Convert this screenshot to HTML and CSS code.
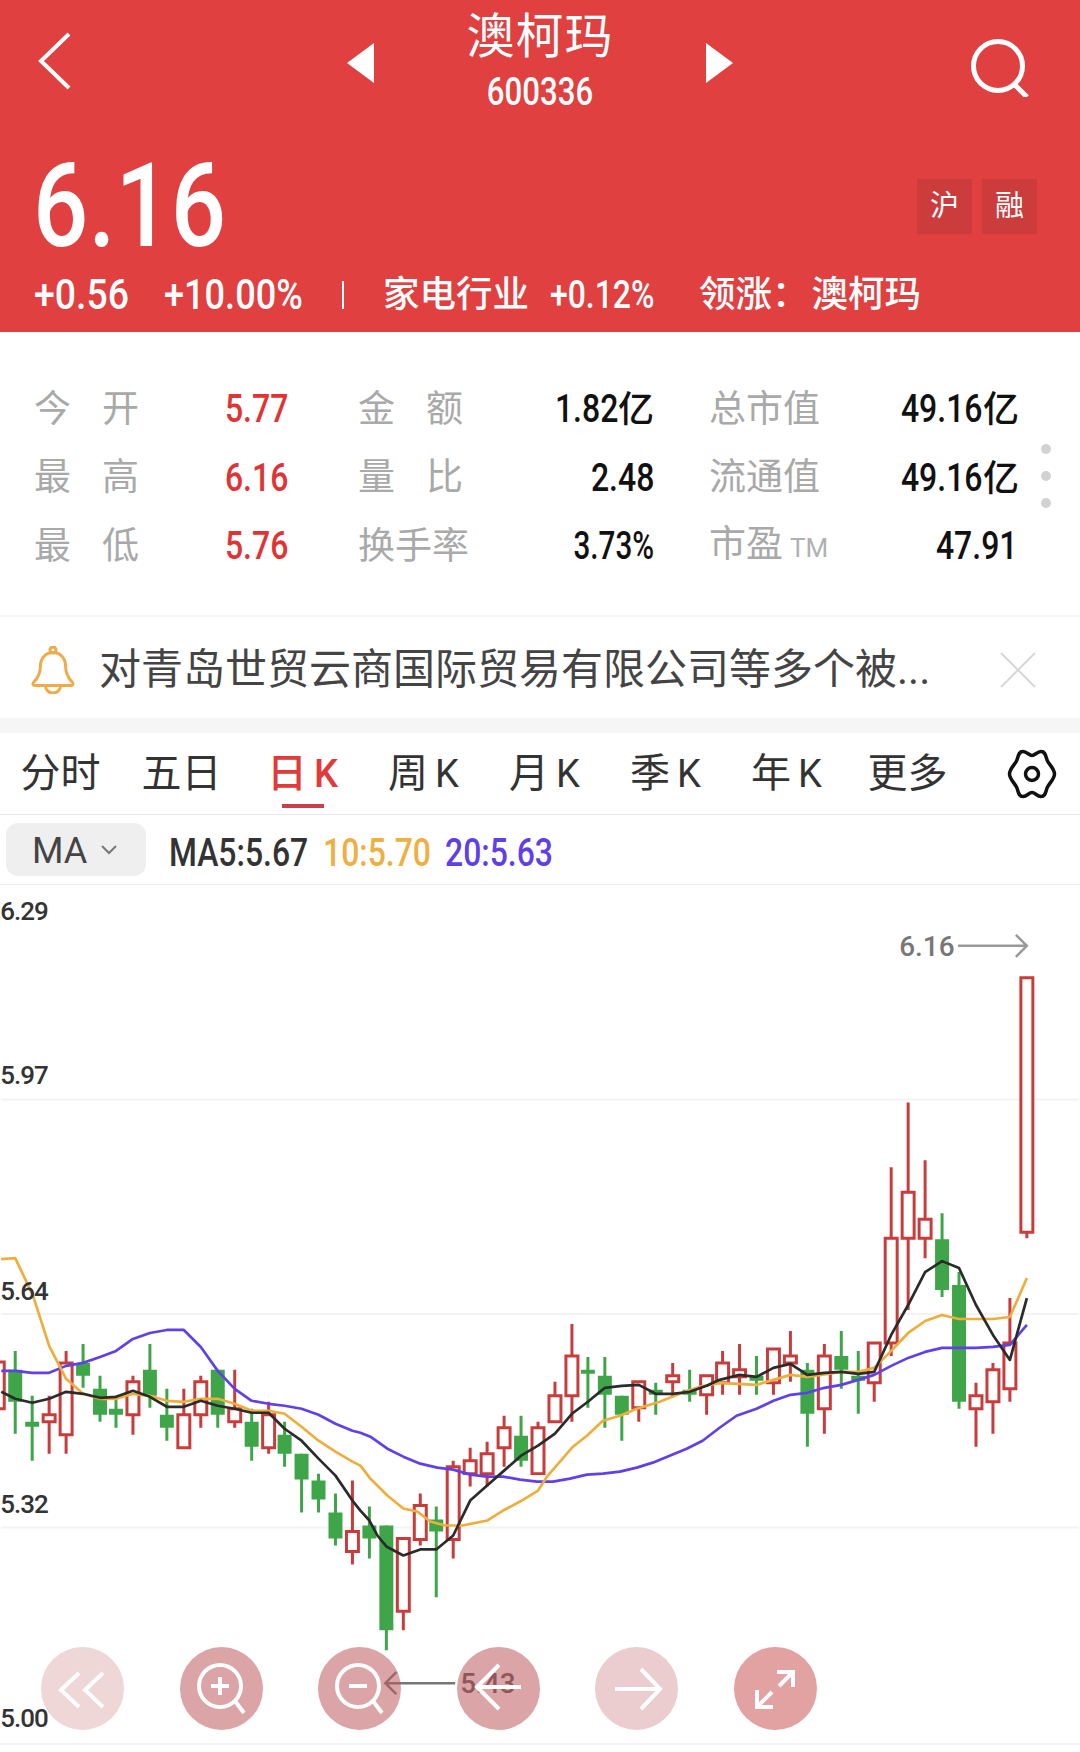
FILE: index.html
```html
<!DOCTYPE html>
<html lang="zh">
<head>
<meta charset="utf-8">
<title>澳柯玛 600336</title>
<link rel="stylesheet" href="styles.css">
</head>
<body>
<div class="page">
  <header class="hero">
    <div class="topbar">
      <svg class="back" viewBox="0 0 34 58"><path d="M32 2L4 29l28 27"/></svg>
      <div class="switcher">
        <svg class="tri" viewBox="0 0 27 40"><path d="M27 0V40L0 20Z"/></svg>
        <div class="name">
          <div class="name-cn">澳柯玛</div>
          <div class="name-code">600336</div>
        </div>
        <svg class="tri" viewBox="0 0 27 40"><path d="M0 0V40L27 20Z"/></svg>
      </div>
      <svg class="search" viewBox="0 0 58 58"><circle cx="27" cy="27" r="24.5"/><path d="M43 45l13 13"/></svg>
    </div>
    <div class="price-row">
      <div class="price">6.16</div>
      <div class="tags"><span class="tag">沪</span><span class="tag">融</span></div>
    </div>
    <div class="change-row">
      <span class="chg chg-abs">+0.56</span>
      <span class="chg chg-pct">+10.00%</span>
      <span class="chg-sep"></span>
      <span class="ind">家电行业</span>
      <span class="chg ind-pct">+0.12%</span>
      <span class="ind lead">领涨：</span>
      <span class="ind lead-name">澳柯玛</span>
    </div>
  </header>

  <section class="stats">
    <div class="stat s1"><span class="lab wide">今开</span><span class="val up"><span class="num">5.77</span></span></div>
    <div class="stat s2"><span class="lab wide">金额</span><span class="val"><span class="num">1.82</span>亿</span></div>
    <div class="stat s3"><span class="lab">总市值</span><span class="val"><span class="num">49.16</span>亿</span></div>
    <div class="stat s1"><span class="lab wide">最高</span><span class="val up"><span class="num">6.16</span></span></div>
    <div class="stat s2"><span class="lab wide">量比</span><span class="val"><span class="num">2.48</span></span></div>
    <div class="stat s3"><span class="lab">流通值</span><span class="val"><span class="num">49.16</span>亿</span></div>
    <div class="stat s1"><span class="lab wide">最低</span><span class="val up"><span class="num">5.76</span></span></div>
    <div class="stat s2"><span class="lab">换手率</span><span class="val"><span class="num pct">3.73%</span></span></div>
    <div class="stat s3"><span class="lab">市盈<small class="ttm">TM</small></span><span class="val inset"><span class="num">47.91</span></span></div>
    <div class="dots"><i></i><i></i><i></i></div>
  </section>

  <section class="notice">
    <svg class="bell" viewBox="0 0 46 48"><circle cx="23" cy="4" r="3"/><path d="M3.500 36.500C9 31 10.500 26 10.500 19.500 10.500 12 16 6.500 23 6.500S35.500 12 35.500 19.500C35.500 26 37 31 42.500 36.500 43.500 38 43 39.500 41 39.500H5C3 39.500 2.500 38 3.500 36.500ZM15.500 40A7.500 7 0 0 0 30.500 40"/></svg>
    <div class="notice-text">对青岛世贸云商国际贸易有限公司等多个被...</div>
    <svg class="close" viewBox="0 0 36 36"><path d="M1 1L35 35M35 1L1 35"/></svg>
  </section>

  <nav class="tabs">
    <span class="tab">分时</span>
    <span class="tab">五日</span>
    <span class="tab active">日<em>K</em></span>
    <span class="tab">周<em>K</em></span>
    <span class="tab">月<em>K</em></span>
    <span class="tab">季<em>K</em></span>
    <span class="tab">年<em>K</em></span>
    <span class="tab">更多</span>
    <svg class="gear" viewBox="0 0 50 50"><path d="M25 6.500C28 6.500 30 2.500 34 2.500C39 2.500 38.500 8 40.500 12C42.500 16 47.500 20 47.500 25C47.500 30 42.500 34 40.500 38C38.500 42 39 47.500 34 47.500C30 47.500 28 43.500 25 43.500C22 43.500 20 47.500 16 47.500C11 47.500 11.500 42 9.500 38C7.500 34 2.500 30 2.500 25C2.500 20 7.500 16 9.500 12C11.500 8 11 2.500 16 2.500C20 2.500 22 6.500 25 6.500Z"/><circle cx="25" cy="25" r="6.500"/></svg>
  </nav>

  <div class="ma-row">
    <div class="ma-chip"><span class="ma-label">MA</span><svg class="ma-caret" viewBox="0 0 16 10"><path d="M1 1l7 7 7-7"/></svg></div>
    <span class="ma ma5">MA5:5.67</span>
    <span class="ma ma10">10:5.70</span>
    <span class="ma ma20">20:5.63</span>
  </div>

  <section class="chart">
    <svg class="plot" viewBox="0 885 1080 860">
      <path class="grid" d="M0 1100H1080M0 1315H1080M0 1529H1080"/>
      <path class="wick red" d="M-3 1352V1420M48 1397V1455M65 1352V1455M132 1377V1436M183 1390V1449M200 1377V1429M234 1371V1429M268 1403V1455M352 1482V1566M403 1540V1632M420 1495V1547M453 1462V1560M470 1449V1488M487 1443V1488M504 1417V1468M538 1423V1475M555 1383V1423M572 1325V1423M639 1383V1423M673 1364V1397M707 1377V1416M723 1352V1396M740 1345V1396M774 1350V1396M791 1332V1383M825 1345V1435M875 1344V1403M892 1168V1357M909 1103V1311M926 1161V1259M977 1384V1448M994 1364V1435M1011 1299V1403M1028 978V1239"/>
      <path class="wick green" d="M14 1352V1435M31 1397V1462M82 1345V1389M99 1377V1423M115 1397V1429M149 1345V1409M166 1390V1442M217 1371V1429M251 1410V1462M284 1423V1468M301 1455V1514M318 1475V1514M335 1495V1547M369 1508V1560M386 1527V1652M436 1508V1599M521 1417V1468M588 1358V1409M605 1358V1429M622 1397V1442M656 1384V1416M690 1371V1403M757 1357V1396M808 1364V1448M842 1332V1390M859 1352V1415M943 1214V1298M960 1273V1410"/>
      <path class="body-red" d="M-9 1363h12v47h-12zM42 1416h12v7h-12zM59 1364h12v72h-12zM126 1383h12v33h-12zM177 1416h12v33h-12zM194 1383h12v33h-12zM228 1410h12v13h-12zM262 1416h12v33h-12zM346 1533h12v20h-12zM397 1540h12v73h-12zM414 1507h12v34h-12zM447 1468h12v73h-12zM464 1462h12v13h-12zM481 1455h12v20h-12zM498 1429h12v20h-12zM532 1429h12v46h-12zM549 1397h12v26h-12zM566 1357h12v40h-12zM633 1383h12v26h-12zM667 1377h12v6h-12zM701 1377h12v19h-12zM717 1364h12v20h-12zM734 1371h12v7h-12zM768 1350h12v34h-12zM785 1357h12v7h-12zM819 1357h12v53h-12zM869 1344h12v40h-12zM886 1239h12v105h-12zM903 1193h12v46h-12zM920 1220h12v19h-12zM971 1397h12v13h-12zM988 1371h12v32h-12zM1005 1344h12v46h-12zM1022 978h12v255h-12z"/>
      <path class="body-green" d="M7 1371h14v32h-14zM24 1423h14v5h-14zM75 1364h14v13h-14zM92 1390h14v26h-14zM108 1410h14v6h-14zM142 1371h14v26h-14zM159 1416h14v13h-14zM210 1371h14v45h-14zM244 1423h14v25h-14zM277 1436h14v19h-14zM294 1455h14v26h-14zM311 1482h14v19h-14zM328 1514h14v26h-14zM362 1527h14v13h-14zM379 1527h14v105h-14zM429 1521h14v12h-14zM514 1437h14v25h-14zM581 1371h14v4h-14zM598 1377h14v19h-14zM615 1397h14v19h-14zM649 1391h14v5h-14zM683 1391h14v5h-14zM750 1377h14v5h-14zM801 1371h14v44h-14zM835 1357h14v14h-14zM852 1377h14v5h-14zM936 1240h14v51h-14zM953 1286h14v117h-14z"/>
      <polyline class="line l20" points="0,1372 14,1372 31,1374 48,1374 65,1367 82,1364 99,1358 115,1352 132,1340 149,1334 166,1331 183,1331 200,1348 217,1372 234,1390 251,1402 268,1405 284,1407 301,1410 318,1416 335,1425 352,1432 360,1434 370,1438 387,1450 403,1458 420,1465 437,1469 453,1471 470,1476 487,1478 503,1478 520,1481 537,1483 553,1483 570,1480 587,1476 603,1475 620,1473 637,1469 653,1464 670,1457 687,1450 703,1442 720,1429 737,1417 757,1410 774,1402 791,1396 808,1394 825,1389 842,1386 859,1381 875,1376 892,1367 909,1359 926,1353 943,1349 960,1349 977,1349 994,1348 1011,1346 1028,1326"/>
      <polyline class="line l10" points="0,1260 14,1259 32,1297 48,1347 65,1380 82,1395 99,1400 115,1400 132,1395 149,1397 166,1402 183,1403 200,1400 217,1400 234,1405 251,1412 268,1412 284,1415 301,1428 318,1442 335,1453 352,1463 360,1467 370,1480 387,1497 403,1510 417,1513 430,1523 445,1527 462,1527 487,1522 503,1512 520,1503 538,1492 547,1478 560,1463 573,1448 587,1437 603,1422 620,1417 637,1410 660,1403 680,1395 700,1388 720,1384 757,1386 774,1381 791,1376 808,1378 842,1373 859,1373 875,1369 892,1352 909,1334 926,1322 943,1316 960,1320 977,1320 994,1320 1011,1318 1028,1279"/>
      <polyline class="line l5" points="0,1393 14,1400 31,1404 48,1400 65,1393 82,1395 99,1399 115,1398 132,1392 149,1398 166,1408 183,1408 200,1402 217,1407 234,1410 251,1414 268,1414 284,1430 301,1442 318,1460 335,1477 352,1502 360,1512 369,1522 377,1537 386,1548 403,1557 420,1551 436,1551 453,1537 470,1502 487,1487 504,1472 521,1457 538,1447 555,1435 572,1415 588,1403 605,1389 622,1387 639,1386 656,1395 673,1395 690,1393 707,1387 720,1381 740,1376 757,1378 774,1369 791,1365 808,1376 825,1374 842,1373 859,1375 875,1373 892,1336 909,1306 926,1273 943,1262 960,1269 977,1306 994,1336 1011,1361 1028,1299"/>
      <text class="axis" x="-1" y="920">6.29</text>
      <text class="axis" x="-1" y="1084">5.97</text>
      <text class="axis" x="-1" y="1301">5.64</text>
      <text class="axis" x="-1" y="1514">5.32</text>
      <text class="axis" x="-1" y="1729">5.00</text>
      <text class="extreme" x="900" y="956">6.16</text>
      <path class="pointer" d="M959 946H1028M1017 935l11 11-11 11"/>
      <path class="pointer low" d="M455 1685H386M396 1674l-11 11 11 11"/>
      <text class="extreme low-text" x="460" y="1695">5.43</text>
    </svg>
    <div class="tools">
      <div class="tool pale"><svg viewBox="0 0 83 83"><path d="M38 26L20 43l18 17M62 26L44 43l18 17"/></svg></div>
      <div class="tool"><svg viewBox="0 0 83 83"><circle cx="40" cy="39" r="21"/><path d="M55 54l9 12M31 39H49M40 30V48"/></svg></div>
      <div class="tool"><svg viewBox="0 0 83 83"><circle cx="40" cy="39" r="21"/><path d="M55 54l9 12M31 39H49"/></svg></div>
      <div class="tool"><svg viewBox="0 0 83 83"><path d="M64 40H20M42 18L20 40l22 22"/></svg></div>
      <div class="tool mid"><svg viewBox="0 0 83 83"><path d="M20 42H65M46 22L65 42 46 62"/></svg></div>
      <div class="tool strong"><svg viewBox="0 0 83 83"><path d="M43 25H59V40M59 25L45 39M23 43V60H39M23 60L38 45"/></svg></div>
    </div>
  </section>
</div>
</body>
</html>
```
FILE: styles.css
```css
* { box-sizing: border-box; }
html, body { margin: 0; padding: 0; background: #fff; }
body { font-family: Roboto, "Noto Sans CJK SC", sans-serif; color: #222; }
.page { width: 1080px; height: 1752px; overflow: hidden; }

.hero { height: 332px; background: #e04040; color: #fff; }
.topbar { height: 126px; padding: 0 38px; display: grid; grid-template-columns: 1fr 386px 1fr; align-items: center; }
.back { width: 34px; height: 58px; fill: none; stroke: #fff; stroke-width: 4; margin-top: -4px; margin-left: -1px; }
.switcher { display: flex; justify-content: space-between; align-items: center; }
.tri { width: 27px; height: 40px; fill: #fff; }
.name { text-align: center; padding-bottom: 6px; }
.name-cn { font-size: 48px; line-height: 56px; letter-spacing: 1px; }
.name-code { font-size: 38px; font-weight: 500; line-height: 36px; margin: 9px 0 1px 1px; transform: scaleX(.82); }
.search { width: 58px; height: 58px; fill: none; stroke: #fff; stroke-width: 5; justify-self: end; margin: 10px 13px 0 0; }

.price-row { height: 112px; margin-top: 24px; padding: 0 43px 0 33px; display: flex; justify-content: space-between; align-items: center; }
.price { font-size: 116px; line-height: 112px; font-weight: 500; transform: scaleX(.84); transform-origin: left center; }
.tags { display: flex; gap: 10px; }
.tag { width: 55px; height: 55px; background: #cc3c3c; font-size: 29px; line-height: 55px; text-align: center; }

.change-row { height: 50px; margin-top: 8px; padding-left: 34px; display: flex; align-items: center; line-height: 50px; }
.chg { font-size: 42px; font-weight: 500; white-space: nowrap; transform: scaleX(.89); transform-origin: left center; flex: none; }
.chg-abs { width: 96px; }
.chg-pct { width: 138px; margin-left: 34px; transform: scaleX(.86); }
.ind-pct { width: 103px; margin-left: 21px; font-size: 38px; transform: scaleX(.84); }
.ind { font-size: 36.500px; font-weight: 500; flex: none; }
.chg-sep { width: 2px; height: 28px; background: #fff; margin: 0 39px 0 40px; flex: none; }
.lead { margin-left: 46px; }
.lead-name { margin-left: 3px; }

.stats { position: relative; height: 285px; padding: 44px 0 0 34px; display: grid; grid-template-columns: 254px 293px 307px; grid-auto-rows: 68.500px; border-bottom: 2px solid #f6f6f6; }
.stat { display: flex; justify-content: space-between; align-items: center; line-height: 68px; margin-top: -1px; }
.s2 { margin-left: 70px; margin-right: -73px; }
.s3 { margin-left: 128px; margin-right: -131px; }
.lab { font-size: 37px; color: #a9a9a9; }
.lab.wide { letter-spacing: 31px; }
.ttm { font-size: 26px; margin-left: 7px; color: #b0b0b0; }
.val { font-size: 36px; font-weight: 500; color: #111; white-space: nowrap; }
.val.up { color: #e03434; }
.val.inset { margin-right: 2px; }
.num { display: inline-block; font-size: 39px; transform: scaleX(.82); transform-origin: right center; }
.num.pct { transform: scaleX(.76); }
.dots { position: absolute; left: 1041px; top: 112px; display: flex; flex-direction: column; gap: 17px; }
.dots i { display: block; width: 10px; height: 10px; border-radius: 50%; background: #d2d2d2; }

.notice { height: 116px; display: flex; align-items: center; padding: 5px 44px 0 30px; border-bottom: 15px solid #f6f6f6; }
.bell { width: 46px; height: 48px; fill: none; stroke: #efaa4a; stroke-width: 3; flex: none; }
.notice-text { flex: 1; margin-left: 23px; font-size: 42px; line-height: 86px; color: #444; white-space: nowrap; }
.close { width: 36px; height: 36px; fill: none; stroke: #d8d8d8; stroke-width: 2; flex: none; }

.tabs { position: relative; height: 82px; display: flex; align-items: center; border-bottom: 1px solid #e8e8e8; }
.tab { position: relative; width: 121px; text-align: center; font-size: 40px; line-height: 82px; color: #333; flex: none; }
.tab em { font-style: normal; font-size: 38px; margin-left: 7px; }
.tab.active { color: #e03a3a; font-weight: 500; }
.tab.active::after { content: ""; position: absolute; left: 40px; bottom: 7px; width: 42px; height: 4px; background: #c9404a; }
.gear { width: 50px; height: 50px; margin-left: 39px; fill: none; stroke: #111; stroke-width: 3.500; flex: none; }

.ma-row { height: 70px; display: flex; align-items: center; padding-left: 6px; border-bottom: 1px solid #eee; }
.ma-chip { width: 140px; height: 53px; border-radius: 12px; background: #efefef; display: flex; align-items: center; padding-left: 26px; font-size: 36px; color: #444; }
.ma-label { margin-top: 3px; }
.ma-caret { width: 16px; height: 10px; margin-left: 14px; fill: none; stroke: #777; stroke-width: 2; }
.ma { font-size: 38px; font-weight: 500; margin-top: 6px; white-space: nowrap; transform: scaleX(.84); transform-origin: left center; flex: none; }
.ma5 { width: 139px; margin-left: 23px; color: #333; }
.ma10 { width: 107px; margin-left: 15px; color: #eeb043; }
.ma20 { width: 107px; margin-left: 15px; color: #5f3fe8; }

.chart { position: relative; height: 860px; border-bottom: 2px solid #f3f3f3; }
.plot { display: block; width: 1080px; height: 858px; }
.grid { stroke: #f3f3f3; stroke-width: 2; fill: none; }
.wick { stroke-width: 3; fill: none; }
.wick.red { stroke: #c93c3c; }
.wick.green { stroke: #3ea648; }
.body-red { fill: #fff; stroke: #c93c3c; stroke-width: 3; }
.body-green { fill: #3ea648; }
.line { fill: none; stroke-width: 2.700; stroke-linejoin: round; }
.l5 { stroke: #2b2b2b; }
.l10 { stroke: #eeae3c; }
.l20 { stroke: #6040e8; }
.axis { font-size: 26px; font-weight: 500; fill: #333; letter-spacing: -1px; }
.extreme { font-size: 28px; font-weight: 500; fill: #777; }
.low-text { fill: #555; }
.pointer { fill: none; stroke: #999; stroke-width: 2.500; }
.pointer.low { stroke: #777; }

.tools { position: absolute; left: 41px; top: 762px; display: flex; gap: 55.500px; }
.tool { width: 83px; height: 83px; border-radius: 50%; background: rgba(190, 90, 95, .55); }
.tool.pale { background: rgba(190, 90, 95, .25); }
.tool.mid { background: rgba(190, 90, 95, .3); }
.tool.strong { background: rgba(200, 70, 70, .5); }
.tool svg { display: block; width: 83px; height: 83px; fill: none; stroke: #fff; stroke-width: 4; }
```
